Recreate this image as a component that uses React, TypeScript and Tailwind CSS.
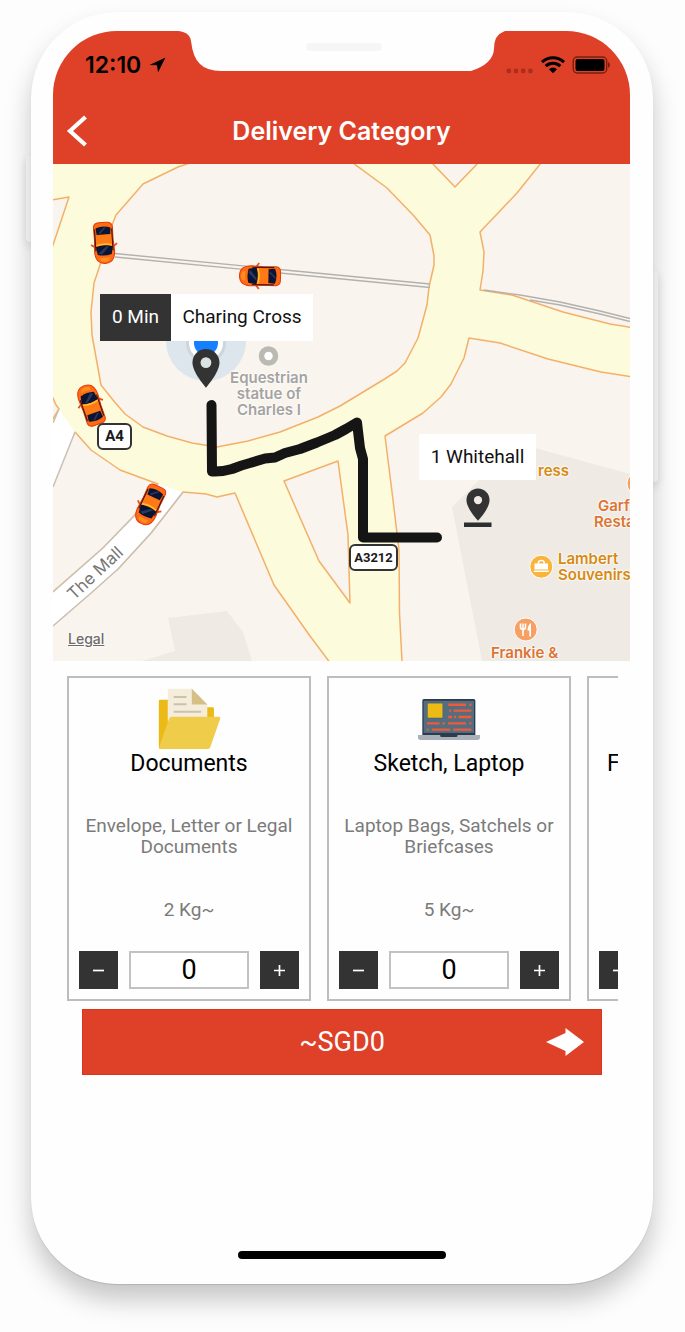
import { useState } from "react";
import type { ReactNode } from "react";

const HALO = "[text-shadow:0_0_2px_#fff,0_0_2px_#fff,0_0_3px_#fff]";

function Notch() {
  return (
    <svg className="absolute left-1/2 top-0 -translate-x-1/2" width="326" height="41" viewBox="0 0 326 41" aria-hidden="true">
      <path d="M0 0 L4 1 Q11 3 12 10 Q14 27 21 33 Q28 40 42 40 H292 Q314 33 315 18 Q315 4 324 1 L326 0Z" fill="#fefefe" />
      <rect x="127" y="12" width="76" height="8" rx="4" fill="#f6f6f6" />
    </svg>
  );
}

function StatusBar() {
  return (
    <div className="relative flex h-17 items-center justify-between pl-8 pr-5">
      <div className="flex items-center gap-2 text-black">
        <span className="font-['Inter',sans-serif] text-[23px] font-semibold leading-none">12:10</span>
        <svg width="17" height="16" viewBox="0 0 17 16" aria-hidden="true">
          <path d="M16.5 0.5 L0.5 8 L8 8.2 L9 15.5Z" fill="#000" />
        </svg>
      </div>
      <Notch />
      <svg width="104" height="20" viewBox="0 0 104 20" aria-label="Wi-Fi connected, battery full">
        <g fill="#a92f1c">
          <circle cx="2.8" cy="16" r="2.4" />
          <circle cx="10" cy="16" r="2.4" />
          <circle cx="17.2" cy="16" r="2.4" />
          <circle cx="24.4" cy="16" r="2.4" />
        </g>
        <g fill="none" stroke="#000" strokeWidth="3">
          <path d="M36 7.2 A16 16 0 0 1 58 7.2" />
          <path d="M39.7 11.2 A10.6 10.6 0 0 1 54.3 11.2" />
        </g>
        <path d="M47 18.2 L43 14.2 A5.8 5.8 0 0 1 51 14.2Z" fill="#000" />
        <rect x="67.2" y="2" width="33.5" height="16" rx="4" fill="none" stroke="#76200f" strokeWidth="1.4" />
        <rect x="69.5" y="4" width="29" height="12" rx="2" fill="#000" />
        <path d="M102 7 Q104 8 104 10 T102 13Z" fill="#76200f" />
      </svg>
    </div>
  );
}

function Car({ x, y, angle }: { x: number; y: number; angle: number }) {
  return (
    <g transform={`translate(${x} ${y}) rotate(${angle})`}>
      <path d="M-9 4 L-13 1 M9 4 L13 1" stroke="#e8501a" strokeWidth="1.8" />
      <path d="M-9.5 -16 Q-9 -20.500 -4 -20.500 H4 Q9 -20.500 9.5 -16 L9.3 -4 L10 8 Q10 20.500 0 20.500 Q-10 20.500 -10 8 L-9.3 -4Z" fill="#ff6a13" stroke="#e5390c" strokeWidth="1" />
      <path d="M-8.6 -14 V8 M8.6 -14 V8" stroke="#4a1a14" strokeWidth="1.2" />
      <path d="M-7.500 -15 Q0 -18 7.500 -15 L6.800 -8.500 H-6.800Z" fill="#0b1433" />
      <path d="M-8.500 3.500 Q0 1 8.500 3.500 L7 11.500 Q0 13.500 -7 11.500Z" fill="#0b1433" />
      <path d="M-6 10 L2 3.500 L5 3.500 L-3 11.500Z M-5 -10 L1 -15.500 L3 -15.500 L-3 -9.500Z" fill="#26395e" />
      <path d="M-7.600 -8 H7.600 L7.900 3 Q0 .500 -7.900 3Z" fill="#ff7a16" />
      <path d="M-7.800 1.500 Q0 -1 7.800 1.500 V3 Q0 .500 -7.800 3Z" fill="#ffc02c" />
      <path d="M-5 14.500 Q0 15.500 5 14.500 L4 18 Q0 19.500 -4 18Z" fill="#ff8e1f" />
    </g>
  );
}

function MapDrawing() {
  return (
    <svg className="absolute left-0 top-0" width="577" height="497" viewBox="53 164 577 497" role="img" aria-label="Map around Charing Cross">
      <rect x="53" y="164" width="577" height="497" fill="#fcfbdb" />
      <g fill="#f9f4ee" stroke="#f3b069" strokeWidth="1.5" strokeLinejoin="round">
        <path d="M40 202 L69 197 L53 245 L40 290Z" />
        <path d="M190 163 L178 167 L143 184 L116 215 L112 225 L101 262 L94 283 L91 312 L92 335 L101 385 L113 400 L125 414 L143 427 L167 436 L192 443 L217 447 L248 441 L280 432 L318 417 L340 406 L383 380 L397 371 L405 363 L418 338 L427 305 L429 287 L434 265 L434 256 L430 235 L414 216 L387 188 L353 163Z" />
        <path d="M432 163 L455 187 L478 163Z" />
        <path d="M541 163 L517 193 L480 232 L484 252 L483 271 L480 290 L512 295 L563 312 L610 324 L640 329 V150Z" />
        <path d="M640 378 L601 372 L548 359 L500 343 L469 338 L464 358 L451 384 L441 397 L423 413 L385 436 L393 500 L399 550 L399.500 613 L403 680 H640Z" />
        <path d="M338 461 L284 481 L319 561 L350 603 L348 535Z" />
        <path d="M40 680 V620 L118 569 L151 533 L183 492 L206 494 L217 497 L235 493 L274 585 L310 636 L340 676Z" />
        <path d="M40 603 L103 548 L134 516 L158 484 L120 470 L91 450 L75 432 L40 500Z" />
        <path d="M40 380 L53 398 L56 405 L59 409 L40 440Z" />
      </g>
      <path d="M59 409 L75 432 L53 487 V423Z" fill="#fff" />
      <path d="M158 484 L183 492 L151 533 L118 569 L90 594 L53 626 V591 L103 547.500 L133.500 516Z" fill="#fff" />
      <path d="M59 409 L53 423 M75 432 L53 487 M158 484 L134 516 L103 548 L53 592 M183 492 L151 533 L118 569 L90 594 L53 626" fill="none" stroke="#c9bfb2" strokeWidth="1.5" />
      <path d="M142 661 L175 651 L168 618 L227 611 L243 632 L252 661Z M535 448 L630 474 V661 H482 L452 507 L478 481Z" fill="#efebe4" />
      <g fill="none" stroke="#b3b1ae" strokeWidth="1.4">
        <path d="M115 253.500 L430 284 M115 257 L430 287.500" />
        <path d="M484 290 L520 295 L560 302 L600 311 L630 318.500" />
        <path d="M530 300 L560 305 L600 314 L630 321.500" />
      </g>
      <circle cx="206" cy="341" r="40" fill="#dde6ed" />
      <circle cx="206" cy="343" r="20" fill="#cdd6de" />
      <circle cx="206" cy="343" r="17" fill="#fff" />
      <circle cx="206" cy="343" r="12" fill="#1280ff" />
      <path d="M211.500 405 L212 471.500 Q222 472 232 469 Q242 465 250 463 L265 458.500 L275 457.500 L285 453 L300 449 L317 442.500 L335 435 L346 429 L357 422.500 L360 448 L363 459 V537.500 H437" fill="none" stroke="#151515" strokeWidth="10" strokeLinecap="round" strokeLinejoin="round" />
      <Car x={104} y={243} angle={-4} />
      <Car x={260} y={276} angle={91} />
      <Car x={91} y={405} angle={161} />
      <Car x={150} y={505} angle={25} />
      <g transform="translate(182.800 345.200) scale(1.930)">
        <path d="M12 2C8.130 2 5 5.130 5 9c0 5.250 7 13 7 13s7-7.750 7-13c0-3.870-3.130-7-7-7z" fill="#333" />
        <circle cx="12" cy="9" r="2.800" fill="#dbe2e4" />
      </g>
      <g transform="translate(458.200 485.200) scale(1.650)">
        <path d="M12 2C8.130 2 5 5.130 5 9c0 5.250 7 12.500 7 12.500s7-7.250 7-12.500c0-3.870-3.130-7-7-7z" fill="#333" />
        <circle cx="12" cy="9" r="2.500" fill="#efebe4" />
      </g>
      <rect x="464" y="522.500" width="27.500" height="4.500" fill="#2b2f2f" />
      <circle cx="268.500" cy="356" r="7" fill="#fff" stroke="#bbb9b4" strokeWidth="5.500" />
      <circle cx="541.300" cy="566.700" r="11.500" fill="#f8b43b" stroke="#fff" strokeWidth="1" />
      <path d="M538.500 564 V562.300 Q538.500 560.500 541.300 560.500 T544.100 562.300 V564" fill="none" stroke="#fff" strokeWidth="1.500" />
      <path d="M534.500 563.500 H548 V569.500 H534.500Z M533.800 570.500 H548.800 V572 H533.800Z" fill="#fff" />
      <circle cx="525.700" cy="629.500" r="11.500" fill="#f6a064" stroke="#fff" strokeWidth="1" />
      <path d="M520.500 623.500 V627 Q520.500 629.500 523 629.500 T525.500 627 V623.500 M523 623.500 V636" fill="none" stroke="#fff" strokeWidth="1.600" />
      <path d="M531 623 Q527.500 625 527.500 630.500 H529.300 V636.500 H531Z" fill="#fff" />
      <circle cx="638.500" cy="483.500" r="11.500" fill="#f6a064" stroke="#fff" strokeWidth="1" />
    </svg>
  );
}

function RoadBadge({ className, children }: { className: string; children: ReactNode }) {
  return (
    <span className={`absolute flex h-[27px] items-center justify-center rounded-md border-2 border-[#333] bg-white font-['Roboto',sans-serif] font-bold text-[#1a1a1a] ${className}`}>
      {children}
    </span>
  );
}

function Place({ className, children }: { className: string; children: ReactNode }) {
  return (
    <span className={`absolute whitespace-nowrap font-['Inter',sans-serif] text-[15px] font-semibold leading-4 ${HALO} ${className}`}>
      {children}
    </span>
  );
}

function DeliveryMap() {
  return (
    <section className="relative h-[497px] overflow-hidden font-['Roboto',sans-serif]" aria-label="Delivery route">
      <MapDrawing />
      <Place className="left-[172px] top-[206px] w-22 text-center text-[#a5a39f]">
        Equestrian
        <br />
        statue of
        <br />
        Charles I
      </Place>
      <Place className="left-[485px] top-[299px] text-[#d68a12]">ress</Place>
      <Place className="left-[541px] top-[334px] text-[#dd7432]">
        <span className="pl-1">Garf</span>
        <br />
        Resta
      </Place>
      <Place className="left-[505px] top-[387px] text-[#d68a12]">
        Lambert
        <br />
        Souvenirs
      </Place>
      <Place className="left-[438px] top-[481px] text-[#dd7432]">Frankie &amp;</Place>
      <span className="absolute left-[5px] top-[397px] w-[74px] -rotate-43 text-center font-['Inter',sans-serif] text-[17px] leading-6 text-[#777]">
        The Mall
      </span>
      <RoadBadge className="left-[44px] top-[259px] w-[35px] text-[15px]">A4</RoadBadge>
      <RoadBadge className="left-[296px] top-[380px] w-[49px] text-[13px]">A3212</RoadBadge>
      <div className="absolute left-[47px] top-[130px] flex h-[47px] items-center text-[19px]">
        <span className="flex h-full w-[71px] items-center justify-center bg-[#333] text-white">0 Min</span>
        <span className="flex h-full w-[142px] items-center justify-center bg-white text-[#111]">Charing Cross</span>
      </div>
      <span className="absolute left-[366px] top-[270px] flex h-[46px] w-[117px] items-center justify-center bg-white text-[19px] text-[#111]">
        1 Whitehall
      </span>
      <a href="#legal" className={`absolute left-[15px] top-[467px] font-['Inter',sans-serif] text-sm font-medium leading-4 text-[#6d6a67] underline ${HALO}`}>
        Legal
      </a>
    </section>
  );
}

function FolderIcon() {
  return (
    <svg width="63" height="62" viewBox="0 0 190 188" aria-hidden="true">
      <path d="M2 40 Q2 36 6 36 H50 V58 H165 Q169 58 169 62 V110 L60 184 H6 Q2 184 2 180Z" fill="#ecba16" />
      <path d="M29 2 H103 L149 50 V100 H29Z" fill="#f5eddc" />
      <path d="M102 2 L149 50 H102Z" fill="#d6bf86" />
      <path d="M47 27 H86 M47 49 H86 M47 72 H130" stroke="#cfc0ab" strokeWidth="6" />
      <path d="M41 87 H184 Q190 87 188 93 L158 180 Q156 185 151 185 H6 Q1 185 3 179 L33 93 Q35 87 41 87Z" fill="#efcd4a" />
    </svg>
  );
}

function LaptopIcon() {
  return (
    <svg width="62" height="41" viewBox="0 0 187 123" aria-hidden="true">
      <path d="M13 5 Q13 0 18 0 H168 Q173 0 173 5 V108 H13Z" fill="#2b3c4e" />
      <rect x="17" y="5" width="152" height="97" fill="#546e7f" />
      <rect x="28" y="12" width="47" height="45" fill="#eebb14" stroke="#35597f" strokeWidth="1.500" />
      <path d="M91 17 H145 M155 17 H161 M94 35 H100 M107 35 H161 M91 54 H103 M109 54 H115 M122 54 H161 M27 73 H65 M74 73 H81 M91 73 H145 M155 73 H161 M27 92 H32 M42 92 H97 M107 92 H161" stroke="#f0593a" strokeWidth="7" />
      <path d="M0 108 H187 V115 Q187 123 179 123 H8 Q0 123 0 115Z" fill="#a9b0b8" />
      <path d="M67 108 H119 V111 Q119 114 115 114 H71 Q67 114 67 111Z" fill="#2b3c4e" />
    </svg>
  );
}

function StepIcon({ plus }: { plus?: boolean }) {
  return (
    <svg width="13" height="13" viewBox="0 0 13 13" aria-hidden="true">
      <path d={plus ? "M1 6.500 H12 M6.500 1 V12" : "M1 6.500 H12"} stroke="#fff" strokeWidth="1.700" />
    </svg>
  );
}

type Category = { id: string; title: string; text: string; weight: string; icon: ReactNode; titleClass: string };

const categories: Category[] = [
  { id: "documents", title: "Documents", text: "Envelope, Letter or Legal Documents", weight: "2 Kg~", icon: <FolderIcon />, titleClass: "text-center" },
  { id: "laptop", title: "Sketch, Laptop", text: "Laptop Bags, Satchels or Briefcases", weight: "5 Kg~", icon: <LaptopIcon />, titleClass: "text-center" },
  { id: "f", title: "F", text: "", weight: "", icon: null, titleClass: "pl-2" },
];

function CategoryCard({ category }: { category: Category }) {
  const [count, setCount] = useState(0);
  return (
    <article className="w-[244px] shrink-0 border-2 border-[#bdbdbd] p-2.5">
      <div className="flex h-[62px] items-center justify-center">{category.icon}</div>
      <h2 className={`h-7 text-[23px] leading-7 text-black ${category.titleClass}`}>{category.title}</h2>
      <p className="mt-[37px] h-[42px] text-center text-[19px] leading-[21px] text-[#7b7b7b]">{category.text}</p>
      <p className="mt-[42px] h-[21px] text-center text-[19px] leading-[21px] text-[#7b7b7b]">{category.weight}</p>
      <div className="mt-[31px] flex h-[38px] gap-[11px]">
        <button type="button" aria-label="Decrease" onClick={() => setCount(Math.max(0, count - 1))} className="flex w-[39px] items-center justify-center bg-[#333]">
          <StepIcon />
        </button>
        <input
          aria-label={`${category.title} quantity`}
          value={count}
          onChange={(e) => setCount(Number(e.target.value) || 0)}
          className="w-0 min-w-0 flex-1 border-2 border-[#c2c2c2] bg-white text-center text-[27px] leading-none text-black outline-none"
        />
        <button type="button" aria-label="Increase" onClick={() => setCount(count + 1)} className="flex w-[39px] items-center justify-center bg-[#333]">
          <StepIcon plus />
        </button>
      </div>
    </article>
  );
}

export default function App() {
  return (
    <main className="min-h-screen bg-[#fdfdfd] pb-12 pl-[31px] pr-8 pt-3">
      <div className="relative mx-auto w-full max-w-[622px]">
        <div className="absolute -left-[5px] top-[143px] h-[87px] w-2.5 rounded-l-sm bg-[#fefefe] shadow-[0_4px_10px_rgba(0,0,0,0.12)]" />
        <div className="absolute -right-[5px] top-[259px] h-[211px] w-2.5 rounded-r-sm bg-[#fefefe] shadow-[0_4px_10px_rgba(0,0,0,0.12)]" />
        <div className="relative rounded-[86px] bg-[#fefefe] pb-[25px] pl-[22px] pr-[23px] pt-[19px] shadow-[0_16px_26px_rgba(0,0,0,0.22),0_1px_1px_rgba(0,0,0,0.12)]">
          <header className="rounded-t-[64px] bg-[#df4128]">
            <StatusBar />
            <div className="grid h-[65px] grid-cols-[48px_1fr_48px] items-center">
              <button type="button" aria-label="Back" className="flex h-full items-center pl-3">
                <svg width="24" height="34" viewBox="0 0 24 34" aria-hidden="true">
                  <path d="M20.500 2 L5 16 L20.500 30" fill="none" stroke="#fff" strokeWidth="4.200" />
                </svg>
              </button>
              <h1 className="whitespace-nowrap text-center font-['Inter',sans-serif] text-[25px] font-semibold text-white">Delivery Category</h1>
            </div>
          </header>
          <DeliveryMap />
          <div className="font-['Roboto',sans-serif]">
            <div className="ml-3.5 mr-3 mt-[15px] flex gap-4 overflow-x-auto [scrollbar-width:none]">
              {categories.map((category) => (
                <CategoryCard key={category.id} category={category} />
              ))}
            </div>
            <div className="mt-2 pl-[29px] pr-7">
              <button type="button" className="grid h-[66px] w-full grid-cols-[55px_1fr_55px] items-center border border-[#d8351c] bg-[#df4128] text-[27px] text-white">
                <span />
                <span>~SGD0</span>
                <svg width="38" height="28" viewBox="0 0 38 28" aria-hidden="true">
                  <path d="M0 14 L19.500 5 V0 L38 14 L19.500 28 V23Z" fill="#fff" />
                </svg>
              </button>
            </div>
          </div>
          <div className="mx-auto mt-44 h-2 w-52 rounded-full bg-black" />
        </div>
      </div>
    </main>
  );
}
